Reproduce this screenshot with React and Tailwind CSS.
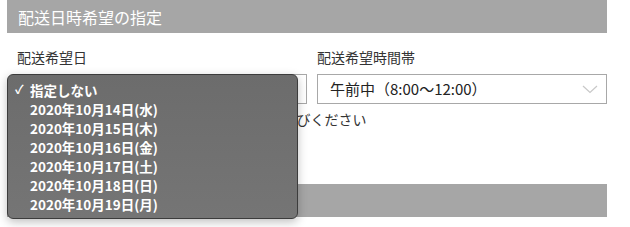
const FONT = {
  fontFamily: '"Noto Sans CJK JP", "Noto Sans", sans-serif',
};

const dates = [
  "2020年10月14日(水)",
  "2020年10月15日(木)",
  "2020年10月16日(金)",
  "2020年10月17日(土)",
  "2020年10月18日(日)",
  "2020年10月19日(月)",
];

function Chevron() {
  return (
    <svg width="16" height="9" viewBox="0 0 16 9" fill="none">
      <path d="M1 1l7 6.5L15 1" stroke="#c8c8c8" strokeWidth="1.2" />
    </svg>
  );
}

function SelectBox({ value }) {
  return (
    <div className="flex h-[30px] items-center justify-between border border-[#a8a8a8] bg-white pl-[12px] pr-[8px]">
      <span className="text-[15px] text-[#222]">{value}</span>
      <Chevron />
    </div>
  );
}

function DropdownMenu() {
  return (
    <div className="absolute left-[7px] top-[74px] w-[291px] rounded-[6px] border border-[#3c3c3c] bg-gradient-to-b from-[#6c6c6c] to-[#757575] pb-[4px] pt-[6px] shadow-[0_3px_10px_rgba(0,0,0,0.25)]">
      <div className="relative flex h-[19px] items-center pl-[22px] text-[13.5px] font-bold leading-none text-white">
        <span className="absolute left-[7px] top-[2px] text-[12px]">✓</span>
        指定しない
      </div>
      {dates.map((d) => (
        <div
          key={d}
          className="flex h-[19px] items-center pl-[22px] text-[13.5px] font-bold leading-none text-white"
        >
          {d}
        </div>
      ))}
    </div>
  );
}

export default function App() {
  return (
    <div className="relative h-[227px] w-[630px] bg-white" style={FONT}>
      <div className="px-[7px]">
        <div className="flex h-[33px] w-[600px] items-center bg-[#a6a6a6] pl-[11px] text-[16px] text-white">
          配送日時希望の指定
        </div>
        <div className="grid w-[600px] grid-cols-2 gap-x-[10px] pl-[10px] pt-[15px]">
          <div>
            <div className="mb-[8px] text-[14px] leading-[18px] text-[#333]">
              配送希望日
            </div>
            <SelectBox value="指定しない" />
          </div>
          <div>
            <div className="mb-[8px] text-[14px] leading-[18px] text-[#333]">
              配送希望時間帯
            </div>
            <SelectBox value="午前中（8:00〜12:00）" />
          </div>
          <div className="col-span-2 mt-[5px] whitespace-nowrap text-[14px] leading-[20px] text-[#333]">
            ※配送希望日をプルダウンメニューからお選びください
          </div>
        </div>
        <div className="mt-[55px] h-[33px] w-[600px] bg-[#a6a6a6]" />
      </div>
      <DropdownMenu />
    </div>
  );
}
